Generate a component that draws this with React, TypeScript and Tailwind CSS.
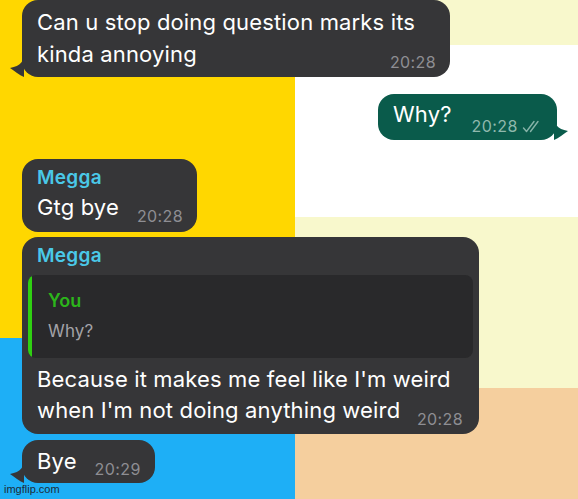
import React from "react";

const Tail = ({ side, color }: { side: "left" | "right"; color: string }) =>
  side === "left" ? (
    <svg
      className="absolute bottom-0 left-[-13px]"
      width="16"
      height="24"
      viewBox="0 0 16 24"
    >
      <path d="M15 0 C15 8 12 13 1 15 C6 18 10 22 15 24 Z" fill={color} />
    </svg>
  ) : (
    <svg
      className="absolute bottom-0 right-[-12px]"
      width="16"
      height="24"
      viewBox="0 0 16 24"
    >
      <path d="M1 0 C1 8 4 13 15 15 C10 18 6 22 1 24 Z" fill={color} />
    </svg>
  );

const Time = ({ children, className = "" }: { children: React.ReactNode; className?: string }) => (
  <span className={`text-[16px] text-[#8e8e93] tracking-[0.4px] ${className}`}>{children}</span>
);

const Ticks = () => (
  <svg width="21" height="13" viewBox="0 0 21 13" fill="none" stroke="#86b3a8" strokeWidth="1.4" strokeLinecap="round" strokeLinejoin="round">
    <path d="M1.5 8 L4.5 11.5 L12 1.5" />
    <path d="M8.5 11.5 L16 1.5" />
  </svg>
);

export default function App() {
  return (
    <div className="relative w-[578px] h-[499px] overflow-hidden font-['Inter',sans-serif] text-white">
      {/* background blocks */}
      <div className="absolute inset-0 grid grid-cols-[295px_1fr]">
        <div className="flex flex-col">
          <div className="h-[338px] bg-[#ffd700]" />
          <div className="flex-1 bg-[#1eaff6]" />
        </div>
        <div className="flex flex-col">
          <div className="h-[45px] bg-[#f8f8cc]" />
          <div className="h-[172px] bg-white" />
          <div className="h-[171px] bg-[#f8f8cc]" />
          <div className="flex-1 bg-[#f5cf9e]" />
        </div>
      </div>

      <div className="relative flex flex-col pl-[22px] text-[22px] tracking-[0.15px]">
        {/* 1 */}
        <div className="relative w-[428px] h-[77px] rounded-[16px] bg-[#363638] pl-[15px] pr-[14px] pt-[6px]">
          <div className="leading-[32px]">Can u stop doing question marks its</div>
          <div className="flex items-baseline justify-between">
            <span className="leading-[32px]">kinda annoying</span>
            <Time className="translate-y-[6px]">20:28</Time>
          </div>
          <Tail side="left" color="#363638" />
        </div>

        {/* Why? */}
        <div className="relative self-end mr-[21px] mt-[17px] w-[179px] h-[46px] rounded-[16px] bg-[#0a5b4b] pl-[15px] pt-[4px] flex items-baseline">
          <span className="leading-[32px]">Why?</span>
          <span className="ml-[20px] translate-y-[10px] flex items-center gap-[4px]">
            <span className="text-[16px] text-[#8fb8ad] tracking-[0.4px]">20:28</span>
            <Ticks />
          </span>
          <Tail side="right" color="#0a5b4b" />
        </div>

        {/* Megga 1 */}
        <div className="mt-[19px] w-[175px] h-[73px] rounded-[16px] bg-[#363638] pl-[15px] pt-[6px]">
          <div className="leading-[26px] text-[19px] font-semibold tracking-[0.3px] text-[#4ac8e8]">Megga</div>
          <div className="flex items-baseline">
            <span className="leading-[32px]">Gtg bye</span>
            <Time className="ml-[18px] translate-y-[7px]">20:28</Time>
          </div>
        </div>

        {/* Megga reply */}
        <div className="mt-[5px] w-[457px] h-[197px] rounded-[16px] bg-[#363638] px-[6px] pt-[6px]">
          <div className="pl-[9px] leading-[26px] text-[19px] font-semibold tracking-[0.3px] text-[#4ac8e8]">Megga</div>
          <div className="mt-[6px] h-[83px] rounded-[8px] bg-[#29292b] flex overflow-hidden">
            <div className="w-[4px] bg-[#2fd012] rounded-l-[8px]" />
            <div className="pl-[16px] pt-[13px]">
              <div className="leading-[26px] text-[18px] font-semibold text-[#2cb51b]">You</div>
              <div className="mt-[4px] leading-[26px] text-[17px] text-[#a3a3a8]">Why?</div>
            </div>
          </div>
          <div className="pl-[9px] pr-[10px] mt-[6px]">
            <div className="leading-[31px]">Because it makes me feel like I'm weird</div>
            <div className="flex items-baseline justify-between">
              <span className="leading-[31px]">when I'm not doing anything weird</span>
              <Time className="translate-y-[7px]">20:28</Time>
            </div>
          </div>
        </div>

        {/* Bye */}
        <div className="relative mt-[6px] w-[133px] h-[43px] rounded-[16px] bg-[#363638] pl-[15px] pt-[5px] flex items-baseline">
          <span className="leading-[32px]">Bye</span>
          <Time className="ml-[18px] translate-y-[6px]">20:29</Time>
          <Tail side="left" color="#363638" />
        </div>
      </div>

      <div className="absolute left-[4px] bottom-[4px] text-[11px] leading-[11px] text-[#1d2b36] font-['Liberation_Sans',sans-serif]">
        imgflip.com
      </div>
    </div>
  );
}
